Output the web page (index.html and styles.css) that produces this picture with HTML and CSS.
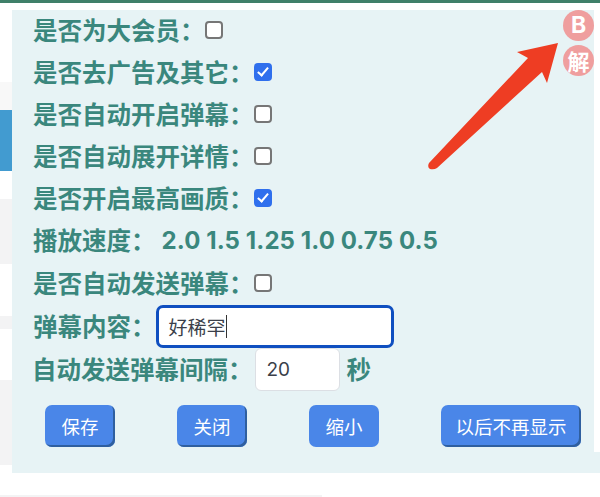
FILE: index.html
```html
<!DOCTYPE html>
<html lang="zh-CN"><head>
<meta charset="utf-8">
<link rel="stylesheet" href="styles.css">
</head>
<body>
<div class="page-bg">
    <div class="bg-white h-79"></div>
    <div class="bg-light h-28"></div>
    <div class="bg-blue h-61"></div>
    <div class="bg-white h-28"></div>
    <div class="bg-gray h-65"></div>
    <div class="bg-white h-52"></div>
    <div class="bg-gray h-13"></div>
    <div class="bg-white h-51"></div>
    <div class="bg-gray h-85"></div>
</div>
<div class="panel">
    <div class="row row-first"><span class="label">是否为大会员：</span><input type="checkbox"></div>
    <div class="row"><span class="label">是否去广告及其它：</span><input type="checkbox" checked></div>
    <div class="row"><span class="label">是否自动开启弹幕：</span><input type="checkbox"></div>
    <div class="row"><span class="label">是否自动展开详情：</span><input type="checkbox"></div>
    <div class="row"><span class="label">是否开启最高画质：</span><input type="checkbox" checked></div>
    <div class="row"><span class="label">播放速度：</span><span class="speeds">2.0 1.5 1.25 1.0 0.75 0.5</span></div>
    <div class="row row-low"><span class="label">是否自动发送弹幕：</span><input type="checkbox"></div>
    <div class="row row-low"><span class="label">弹幕内容：</span><div class="text-box">好稀罕<i class="caret"></i></div></div>
    <div class="row row-low row-interval"><span class="label">自动发送弹幕间隔：</span><div class="num-box">20</div><span class="label unit">秒</span></div>
    <div class="buttons">
        <button class="btn btn-save">保存</button>
        <button class="btn btn-close">关闭</button>
        <button class="btn btn-small">缩小</button>
        <button class="btn btn-never">以后不再显示</button>
    </div>
</div>
<div class="panel-corner"></div>
<div class="bottom-line"></div>
<div class="side-btns">
    <div class="round-btn">B</div>
    <div class="round-btn round-cn">解</div>
</div>
<svg class="arrow" viewBox="0 0 140 130">
    <path d="M131 1 L90 10 L101 16 L2 121 Q0 125 3 127 Q7 128 10 126 L115 30 L120 41 Z" fill="#ee3d23"></path>
</svg>
</body>
</html>
```
FILE: styles.css
```css
html, body {
    margin: 0;
    height: 100%;
    overflow: hidden;
}

body {
    position: relative;
    background: #fff;
    border-top: 3px solid #3f8069;
    box-sizing: border-box;
    font-family: "Noto Sans CJK SC", "Liberation Sans", sans-serif;
}

.page-bg {
    width: 12px;
}

.bg-white { background: #fff; }
.bg-light { background: #f8f8f8; }
.bg-gray { background: #f3f3f4; }
.bg-blue { background: #429bd0; }
.h-79 { height: 79px; }
.h-28 { height: 28px; }
.h-61 { height: 61px; }
.h-65 { height: 65px; }
.h-52 { height: 52px; }
.h-13 { height: 13px; }
.h-51 { height: 51px; }
.h-85 { height: 85px; }

.panel {
    position: absolute;
    top: 7px;
    left: 12px;
    width: 582px;
    height: 463px;
    background: #e7f3f5;
    padding: 0 0 0 21px;
    box-sizing: border-box;
}

.panel-corner {
    position: absolute;
    top: 449px;
    left: 594px;
    width: 6px;
    height: 21px;
    background: #e7f3f5;
}

.bottom-line {
    position: absolute;
    left: 0;
    bottom: 0;
    width: 322px;
    height: 2px;
    background: #f3f3f4;
}

.row {
    display: flex;
    align-items: center;
    height: 42px;
}

.row-first {
    margin-top: -1px;
}

.row-low {
    margin-top: 1px;
}

.label {
    font-size: 24.5px;
    font-weight: 700;
    color: #3a877d;
    line-height: 42px;
    white-space: nowrap;
}

.speeds {
    font-family: Inter, "Liberation Sans", sans-serif;
    font-size: 24px;
    font-weight: 700;
    color: #3a877d;
    margin-left: 6px;
    letter-spacing: 0.1px;
}

input[type="checkbox"] {
    appearance: none;
    width: 18px;
    height: 18px;
    margin: 0;
    background: #fff;
    border: 2px solid #767676;
    border-radius: 4px;
    box-sizing: border-box;
    position: relative;
}

input[type="checkbox"]:checked {
    background: #2f6fed;
    border-color: #2f6fed;
}

input[type="checkbox"]:checked::after {
    content: "";
    position: absolute;
    left: 4px;
    top: 0;
    width: 4px;
    height: 9px;
    border: solid #fff;
    border-width: 0 2.5px 2.5px 0;
    transform: rotate(40deg);
}

.text-box {
    width: 238px;
    height: 43px;
    flex-shrink: 0;
    box-sizing: border-box;
    border: 3px solid #0f4fc0;
    border-radius: 7px;
    background: #fff;
    padding-left: 10px;
    display: flex;
    align-items: center;
    font-size: 19px;
    color: #3b3f4a;
}

.caret {
    width: 1px;
    height: 23px;
    background: #333;
}

.row-interval .label:first-child {
    margin-left: -1px;
}

.num-box {
    width: 85px;
    height: 43px;
    flex-shrink: 0;
    box-sizing: border-box;
    border: 1px solid #dcdfe4;
    border-radius: 6px;
    background: #fff;
    margin-left: 2px;
    padding-left: 11px;
    display: flex;
    align-items: center;
    font-family: Inter, "Liberation Sans", sans-serif;
    font-size: 19px;
    color: #3b3f4a;
}

.unit {
    margin-left: 7px;
}

.buttons {
    display: flex;
    margin-top: 15px;
    padding-left: 12px;
    gap: 62px;
}

.btn {
    height: 42px;
    width: 70px;
    border: none;
    border-radius: 7px;
    background: #4a86e8;
    color: #fff;
    font-family: inherit;
    font-size: 18.5px;
    padding: 0;
    box-shadow: inset -2px -2px 0 #2f5f9f;
}

.btn-small { box-shadow: none; }
.btn-never { width: 140px; }

.side-btns {
    position: absolute;
    top: 7px;
    left: 563px;
    display: flex;
    flex-direction: column;
    gap: 4px;
}

.round-btn {
    width: 31px;
    height: 31px;
    border-radius: 50%;
    background: #ef9e9e;
    color: #fff;
    font-family: Inter, "Liberation Sans", sans-serif;
    font-size: 23px;
    font-weight: 700;
    line-height: 31px;
    text-align: center;
}

.round-cn {
    font-family: "Noto Sans CJK SC", sans-serif;
    font-size: 22px;
}

.arrow {
    position: absolute;
    top: 39px;
    left: 427px;
    width: 140px;
    height: 130px;
}
```
